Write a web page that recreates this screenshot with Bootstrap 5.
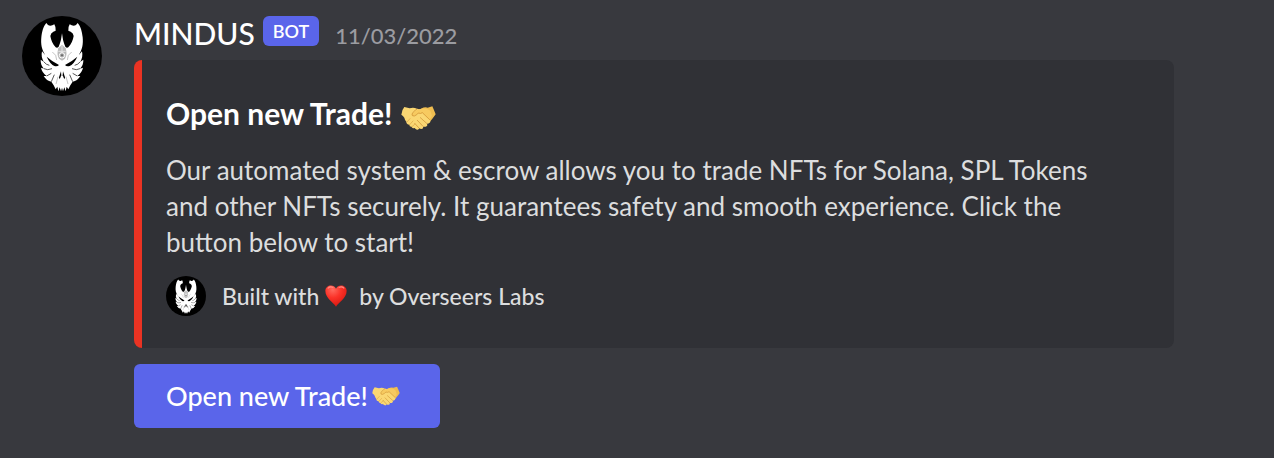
<!DOCTYPE html>
<html lang="en">
<head>
<meta charset="utf-8">
<meta name="viewport" content="width=device-width, initial-scale=1">
<title>MINDUS – Open new Trade</title>
<link href="https://cdn.jsdelivr.net/npm/bootstrap@5.3.0/dist/css/bootstrap.min.css" rel="stylesheet">
<style>
  body { background: #38393e; color: #dcddde; font-family: Lato, "Noto Sans", sans-serif; }
  .message { padding: 16px 100px 24px 22px; gap: 32px; }
  .avatar { width: 80px; height: 80px; }
  .avatar-sm { width: 40px; height: 40px; }
  .author { font-size: 30px; line-height: 34px; font-weight: 500; color: #fff; }
  .bot-tag { font-size: 18px; line-height: 30px; font-weight: 600; padding: 0 10px; border-radius: 6px; background: #5a65ea; color: #fff; }
  .stamp { font-size: 22px; line-height: 40px; font-weight: 500; color: #9b9ca1; }
  .embed { background: #303136; border-left: 8px solid #ea3323; border-radius: 8px; padding: 32px 48px 32px 24px; }
  .embed-title { font-size: 30px; line-height: 42px; font-weight: 700; color: #fff; margin-bottom: 18px; }
  .embed-title svg { margin-top: 10px; }
  .embed-text { font-size: 26px; line-height: 36px; }
  .embed-foot { font-size: 23px; line-height: 32px; font-weight: 500; }
  .heart { width: 22px; height: 22px; margin: 0 12px 0 6px; }
  .btn-trade { --bs-btn-color: #fff; --bs-btn-bg: #5a65ea; --bs-btn-hover-color: #fff; --bs-btn-hover-bg: #4852c8;
    font-size: 27px; line-height: 32px; font-weight: 500; padding: 16px 40px 16px 32px; gap: 4px; border: 0; border-radius: 6px; }
</style>
</head>
<body>
<svg class="position-absolute" width="0" height="0" aria-hidden="true">
  <defs>
    <radialGradient id="red" cx=".35" cy=".2" r=".85"><stop offset="0" stop-color="#ff6a5e"/><stop offset=".45" stop-color="#fb3228"/><stop offset="1" stop-color="#d5160f"/></radialGradient>
  </defs>
  <symbol id="mask" viewBox="0 0 240 240">
    <circle cx="120" cy="120" r="120" fill="#000"/>
    <g id="half" fill="#fff">
      <path d="M120.500 52 C118 68 115 82 110 92 Q106 97 101 94 C92 85 87 72 85 60 Q86 51 94 47 L101 44 Q102 33 97 25 L91 28 Q84 31 78 27 L73 21 C63 32 60 48 58 64 C56 84 59 101 70 118 L60 106 Q56 124 66 138 L56 131 Q55 146 66 158 L57 155 Q60 170 74 180 L65 180 Q74 195 88 197 L95 208 L101 220 L106 212 L109 226 L113 214 L117 226 L120.500 214 Z"/>
      <g fill="#000">
        <path d="M74 122 Q90 136 111 147 Q106 153 97 150 Q84 144 74 122Z"/>
        <path d="M111 184 L117 166 L118 178 L113 190Z"/>
      </g>
      <path d="M66 138 Q72 146 82 148 M66 158 Q76 164 90 158 M74 180 L88 172 M88 197 L97 176" fill="none" stroke="#000" stroke-width="2"/>
      <path d="M91 108 L101 118 L104 132 M102 204 L108 182" fill="none" stroke="#888" stroke-width="1.500"/>
    </g>
    <use href="#half" transform="matrix(-1 0 0 1 240 0)"/>
    <path d="M120 86 L131 97 Q137 116 129 128 L120 134 L111 128 Q103 116 109 97Z" fill="#b9b9b9"/>
    <path d="M120 88 V107 M109 106 L131 106" stroke="#e5e5e5" stroke-width="3"/>
    <circle cx="120" cy="118" r="8" fill="#aaa" stroke="#fff" stroke-width="3"/>
    <circle cx="120" cy="118" r="3" fill="#666"/>
  </symbol>
  <symbol id="shake" viewBox="0 0 105 72">
    <path d="M60 8 Q72 2 80 5 L94 1 Q99 12 104 25 Q99 32 93 40 L82 52 L58 24Z" fill="#efbd50"/>
    <path d="M10 3 L26 7 Q37 3 48 8 L66 13 Q77 28 86 39 Q91 47 85 51 Q81 54 78 53 Q81 60 74 62 Q69 63 67 62 Q67 69 61 69 Q57 69 55 67 Q53 72 48 71 Q43 70 41 66 Q34 68 32 62 Q25 63 25 56 Q16 55 16 47 Q11 41 10 35 Q6 29 1 26 Q2 12 10 3Z" fill="#fad773"/>
    <path d="M61 8 Q45 10 34 22 Q30 30 38 30 Q45 29 52 22 Q59 24 64 21 L85 40 Q91 36 93 29 L88 14 Q76 5 61 8Z" fill="#f7ca60"/>
    <path d="M48 9 Q36 16 33 24 Q32 31 40 30 Q48 27 52 21 Q59 24 64 20 L86 41 M58 35 L77 52 M49 43 L66 61 M41 52 L54 66" fill="none" stroke="#c98a2d" stroke-width="2" stroke-linecap="round"/>
    <path d="M18 48 L27 38 M26 56 L36 45 M33 62 L42 54" fill="none" stroke="#d9a143" stroke-width="2" stroke-linecap="round"/>
  </symbol>
  <symbol id="love" viewBox="0 0 64 64">
    <path d="M32 63 C25 51 1 39 1 17 C1 0 25 -5 32 11 C39 -5 63 0 63 17 C63 39 39 51 32 63Z" fill="url(#red)"/>
    <path d="M9 9 Q15 3 23 7 M41 7 Q49 3 55 9" stroke="#ff9288" stroke-width="3" fill="none" stroke-linecap="round"/>
  </symbol>
</svg>

<main class="message d-flex align-items-start">
  <svg class="avatar flex-shrink-0" role="img" aria-label="MINDUS avatar"><use href="#mask"/></svg>
  <div class="flex-grow-1">
    <header class="d-flex align-items-start mb-1">
      <span class="author me-2">MINDUS</span>
      <span class="bot-tag me-3">BOT</span>
      <time class="stamp" datetime="2022-11-03">11/03/2022</time>
    </header>
    <article class="embed mb-3">
      <h1 class="embed-title d-flex align-items-center gap-2">Open new Trade! <svg width="35" height="24" role="img" aria-label="handshake"><use href="#shake"/></svg></h1>
      <p class="embed-text mb-3">Our automated system &amp; escrow allows you to trade NFTs for Solana, SPL Tokens and other NFTs securely. It guarantees safety and smooth experience. Click the button below to start!</p>
      <footer class="embed-foot d-flex align-items-center">
        <svg class="avatar-sm me-3" role="img" aria-label="Overseers Labs"><use href="#mask"/></svg>
        <span>Built with</span>
        <svg class="heart" role="img" aria-label="love"><use href="#love"/></svg>
        <span>by Overseers Labs</span>
      </footer>
    </article>
    <button type="button" class="btn btn-trade d-inline-flex align-items-center">Open new Trade! <svg width="28" height="20" aria-hidden="true"><use href="#shake"/></svg></button>
  </div>
</main>
</body>
</html>
